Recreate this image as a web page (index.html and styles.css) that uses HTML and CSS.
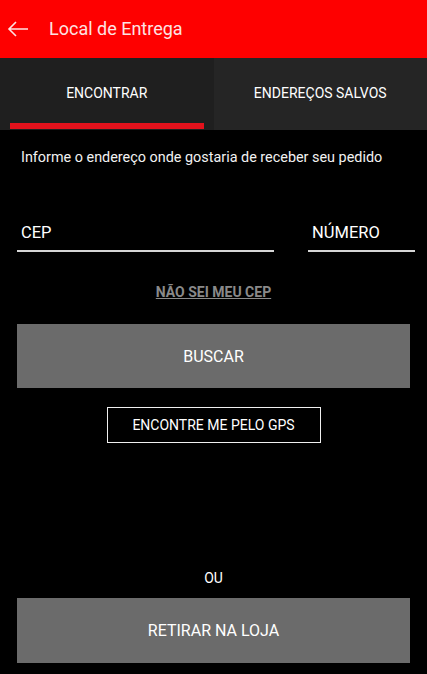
FILE: index.html
```html
<!DOCTYPE html>
<html lang="pt-BR">
<head>
  <meta charset="UTF-8">
  <meta name="viewport" content="width=device-width, initial-scale=1.0">
  <title>Local de Entrega</title>
  <link rel="stylesheet" href="styles.css">
</head>
<body>
  <header class="toolbar">
    <svg class="back" width="22" height="16" viewBox="0 0 22 16">
      <path d="M21 8H2M9 1L2 8l7 7" fill="none" stroke="#fde3e3" stroke-width="1.6"/>
    </svg>
    <span class="title">Local de Entrega</span>
  </header>

  <nav class="tabs">
    <div class="tab active">ENCONTRAR</div>
    <div class="tab">ENDEREÇOS SALVOS</div>
  </nav>

  <main class="content">
    <p class="hint">Informe o endereço onde gostaria de receber seu pedido</p>

    <div class="fields">
      <div class="field cep">CEP</div>
      <div class="field num">NÚMERO</div>
    </div>

    <a class="nocep">NÃO SEI MEU CEP</a>

    <div class="btn buscar">BUSCAR</div>

    <div class="gps-row">
      <div class="btn-outline">ENCONTRE ME PELO GPS</div>
    </div>

    <div class="or">OU</div>

    <div class="btn retirar">RETIRAR NA LOJA</div>
  </main>
</body>
</html>
```

FILE: styles.css
```css
body {
  margin: 0;
  background: #000;
  color: #fff;
  font-family: Roboto, "Liberation Sans", Arial, sans-serif;
  height: 674px;
  overflow: hidden;
}

.toolbar {
  height: 58px;
  background: #fe0000;
  display: flex;
  align-items: center;
  padding-left: 7px;
}
.back {
  display: block;
}
.title {
  margin-left: 20px;
  margin-top: -2px;
  font-size: 18px;
  color: #fde3e3;
}

.tabs {
  display: flex;
  height: 72px;
}
.tab {
  flex: 1;
  display: flex;
  align-items: center;
  justify-content: center;
  font-size: 14px;
  padding-bottom: 2px;
  background: #252525;
}
.tab.active {
  background: #1f1f1f;
  position: relative;
}
.tab.active::after {
  content: "";
  position: absolute;
  left: 10px;
  right: 10px;
  bottom: 1px;
  height: 6px;
  background: #e3121c;
}

.content {
  padding: 0 17px;
}

.hint {
  margin: 19px 0 0 4px;
  font-size: 14.4px;
  line-height: 18px;
  color: #f2f2f2;
}

.fields {
  display: flex;
  justify-content: space-between;
  margin-top: 56px;
}
.field {
  font-size: 16.5px;
  line-height: 20px;
  padding: 0 0 7px 4px;
  border-bottom: 2px solid #d6d6d6;
}
.cep { width: 253px; }
.num { width: 103px; margin-right: -5px; }

.nocep {
  display: block;
  text-align: center;
  margin-top: 32px;
  font-size: 14px;
  line-height: 16px;
  font-weight: bold;
  color: #8a8a8a;
  text-decoration: underline;
}

.btn {
  height: 64px;
  background: #6b6b6b;
  display: flex;
  align-items: center;
  justify-content: center;
  font-size: 16px;
}
.buscar {
  margin-top: 24px;
}

.gps-row {
  display: flex;
  justify-content: center;
  margin-top: 19px;
}
.btn-outline {
  width: 212px;
  height: 34px;
  border: 1px solid #f0f0f0;
  display: flex;
  align-items: center;
  justify-content: center;
  font-size: 14px;
}

.or {
  text-align: center;
  font-size: 14px;
  margin-top: 126px;
  line-height: 18px;
}
.retirar {
  margin-top: 11px;
  height: 65px;
}
```
